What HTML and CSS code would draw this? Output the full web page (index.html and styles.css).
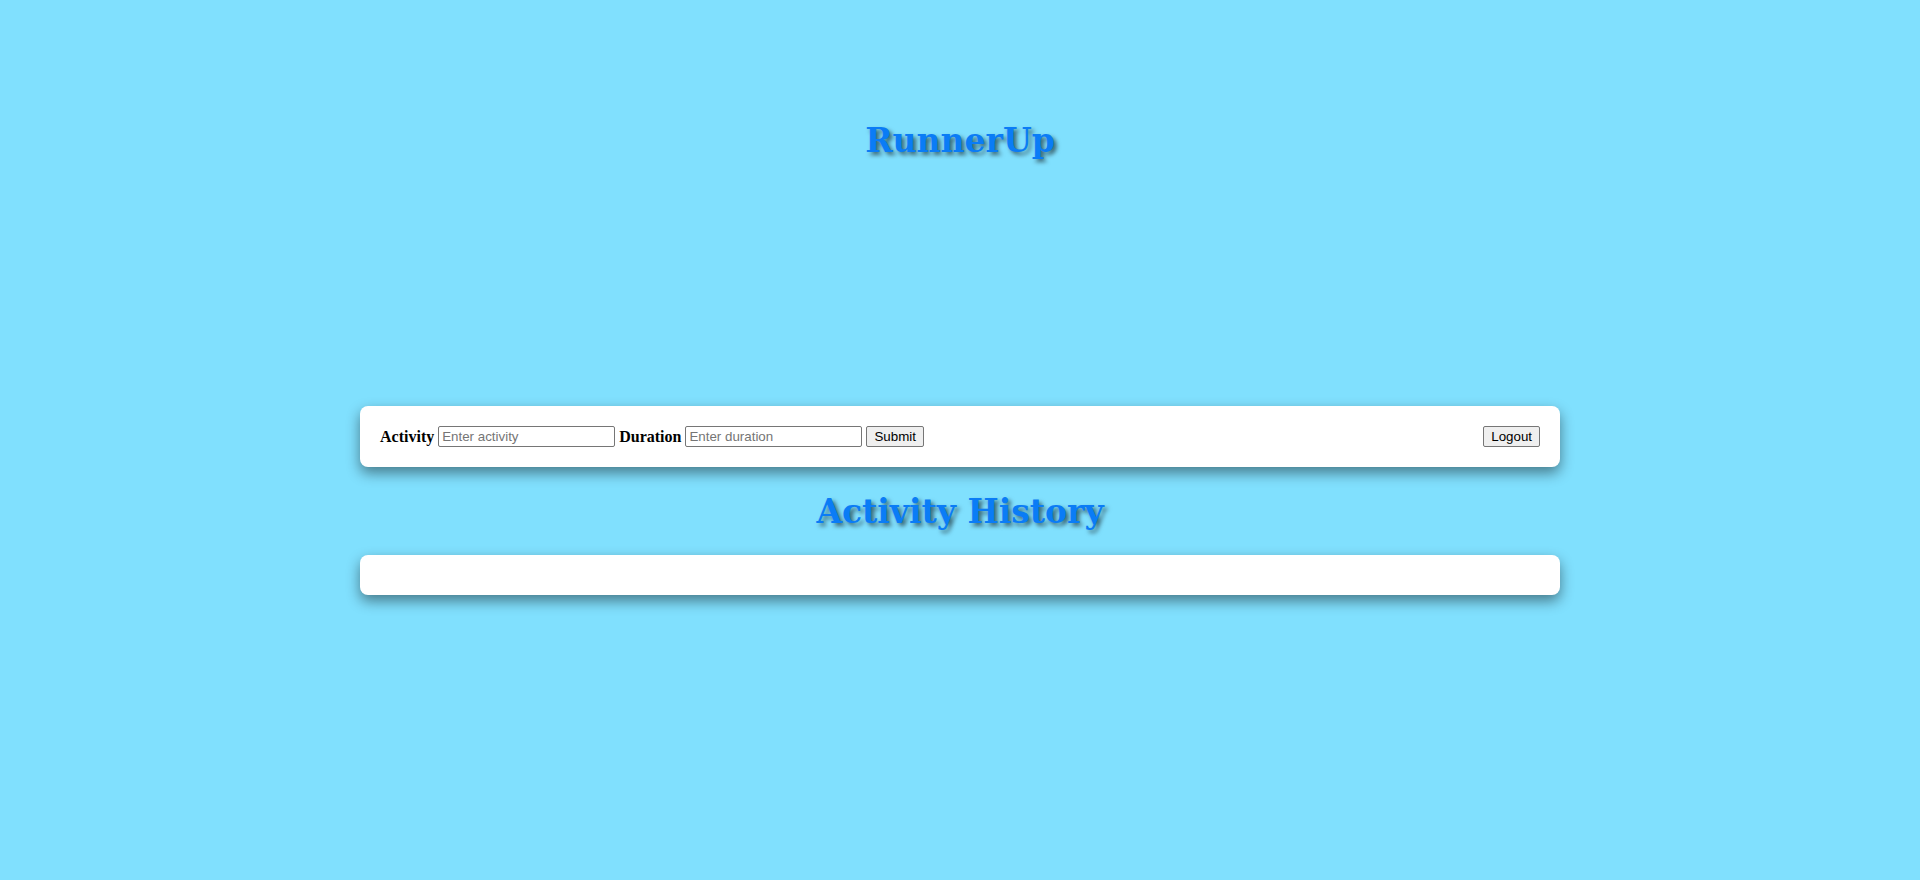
FILE: index.html
```html
<!DOCTYPE html>
<html>
<head>
<meta charset="utf-8">
<title>RunnerUp</title>
<link rel="stylesheet" href="styles.css">
</head>
<body>
<header class="site-header">
  <h1 class="title">RunnerUp</h1>
</header>
<main class="main">
  <section class="card form-card">
    <form class="activity-form" onsubmit="return false;">
      <label class="field-label" for="activity">Activity</label>
      <input class="field-input" id="activity" type="text" placeholder="Enter activity">
      <label class="field-label" for="duration">Duration</label>
      <input class="field-input" id="duration" type="text" placeholder="Enter duration">
      <button class="btn" type="submit">Submit</button>
    </form>
    <button class="btn" type="button">Logout</button>
  </section>
  <h2 class="title section-title">Activity History</h2>
  <section class="card history-card"></section>
</main>
</body>
</html>
```
FILE: styles.css
```css
html, body {
  margin: 0;
  padding: 0;
}
body {
  background: #80e0fe;
  min-height: 880px;
  font-family: "Liberation Serif", serif;
}
.site-header {
  display: flex;
  justify-content: center;
  padding-top: 121px;
  height: 406px;
  box-sizing: border-box;
}
.title {
  margin: 0;
  font-family: "DejaVu Serif", serif;
  font-weight: bold;
  font-size: 33px;
  color: #0a7cf6;
  text-shadow: 3px 3px 4px rgba(0, 0, 0, 0.55);
  text-align: center;
}
.main {
  width: 1200px;
  margin: 0 auto;
  display: flex;
  flex-direction: column;
}
.card {
  background: #fff;
  border-radius: 8px;
  box-shadow: 0 6px 14px rgba(0, 0, 0, 0.45);
  padding: 20px;
}
.form-card {
  display: flex;
  justify-content: space-between;
  align-items: center;
}
.activity-form {
  display: flex;
  align-items: center;
  gap: 4px;
}
.field-label {
  font-family: "Liberation Serif", serif;
  font-weight: bold;
  font-size: 16px;
}
.field-input {
  font-family: "Liberation Sans", sans-serif;
  font-size: 13.333px;
  width: 177px;
  padding: 1px 3px;
  border: 1px solid #767676;
  border-radius: 2px;
  height: 21px;
  box-sizing: border-box;
}
.btn {
  font-family: "Liberation Sans", sans-serif;
  font-size: 13.333px;
  padding: 1px 7px;
  border: 1px solid #767676;
  border-radius: 2px;
  background: #efefef;
  color: #000;
  height: 21px;
  box-sizing: border-box;
}
.section-title {
  margin: 25px 0 24px;
}
.history-card {
  min-height: 40px;
  box-sizing: border-box;
}
```
